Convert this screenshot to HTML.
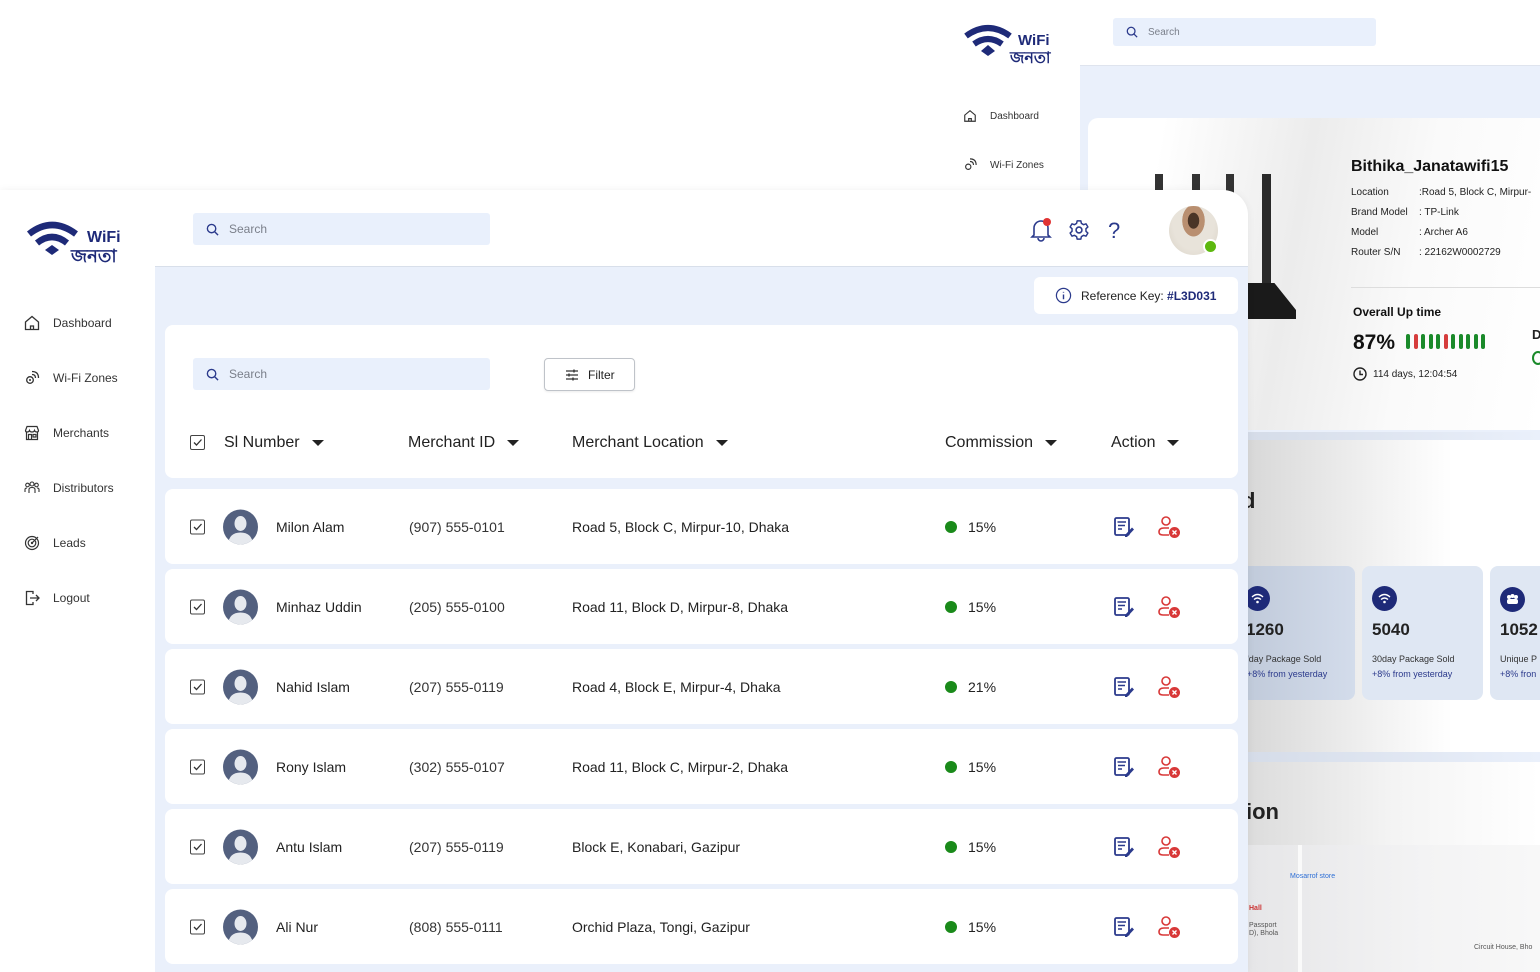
<!DOCTYPE html>
<html><head><meta charset="utf-8"><style>
*{box-sizing:border-box;margin:0;padding:0}
body{width:1540px;height:972px;overflow:hidden;background:#fff;font-family:"Liberation Sans",Arial,sans-serif;position:relative;color:#222}
.abs{position:absolute}
.search{position:absolute;background:#e9f0fc;border-radius:3px;color:#7a7f8a;font-size:12px;display:flex;align-items:center}
.search svg{margin:0 10px 0 13px}
.nav{position:absolute;left:24px;font-size:12px;color:#333;display:flex;align-items:center}
.nav svg{margin-right:13px}
.row{position:absolute;left:165px;width:1073px;height:75px;background:#fff;border-radius:8px;font-size:14px;color:#222}
.row>*{position:absolute;top:50%;transform:translateY(-50%)}
.cb{width:15px;height:15px;border:1.5px solid #444;border-radius:2px}
.th{position:absolute;top:443px;font-size:16px;color:#222;transform:translateY(-50%);display:flex;align-items:center}
.th i{display:inline-block;width:0;height:0;border-left:6px solid transparent;border-right:6px solid transparent;border-top:6px solid #222;margin-left:12px}
.stat{position:absolute;top:566px;height:134px;border-radius:8px;background:#dfe7f3}
</style></head><body>

<!-- BACK SCREEN -->
<div class="abs" style="left:1080px;top:66px;width:460px;height:906px;background:#eaf0fb"></div>
<div class="abs" style="left:1080px;top:0;width:460px;height:66px;background:#fff;border-bottom:1px solid #dfe4ee"></div>
<div class="search" style="left:1113px;top:18px;width:263px;height:28px;font-size:10px"><svg width="12" height="12" viewBox="0 0 14 14"><circle cx="6" cy="6" r="4.5" fill="none" stroke="#2b3a8c" stroke-width="1.5"/><path d="M9.5 9.5L13 13" stroke="#2b3a8c" stroke-width="1.5"/></svg>Search</div>
<svg class="abs" style="left:962px;top:22px" width="92" height="42" viewBox="0 0 92 42"><path d="M4 14 Q26 -2 48 14" fill="none" stroke="#1e2a78" stroke-width="6"/><path d="M12 22 Q26 12 40 22" fill="none" stroke="#1e2a78" stroke-width="6"/><path d="M19 29 L26 23 L33 29 L26 34Z" fill="#1e2a78"/><text x="56" y="23" font-family="Liberation Sans" font-weight="bold" font-size="15" fill="#1e2a78">WiFi</text><text x="48" y="41" font-family="Liberation Sans" font-weight="bold" font-size="16" fill="#1e2a78">জনতা</text></svg>
<div class="nav" style="left:963px;top:109px;font-size:10px"><svg width="14" height="14" viewBox="0 0 16 16"><path d="M2 7L8 2L14 7V14H2Z M6.5 14V11H9.5V14" fill="none" stroke="#333" stroke-width="1.3"/></svg>Dashboard</div>
<div class="nav" style="left:963px;top:158px;font-size:10px"><svg width="14" height="14" viewBox="0 0 16 16"><circle cx="6" cy="10" r="3" fill="none" stroke="#333" stroke-width="1.3"/><path d="M8 4Q12 4 12 8M8 1Q15 1 15 8" fill="none" stroke="#333" stroke-width="1.3"/></svg>Wi-Fi Zones</div>
<div class="abs" style="left:1088px;top:118px;width:452px;height:312px;border-radius:10px 0 0 0;background:linear-gradient(100deg,#fff 15%,#ececec 45%,#fafafa 70%,#fff 100%)"></div>
<div class="abs" style="left:1155px;top:174px;width:8px;height:20px;background:#333"></div>
<div class="abs" style="left:1192px;top:174px;width:8px;height:20px;background:#333"></div>
<div class="abs" style="left:1226px;top:174px;width:8px;height:20px;background:#333"></div>
<div class="abs" style="left:1262px;top:174px;width:9px;height:110px;background:#2a2a2a"></div>
<div class="abs" style="left:1248px;top:283px;width:48px;height:36px;background:#1a1a1a;clip-path:polygon(0 0,55% 0,100% 75%,100% 100%,0 100%)"></div>
<div class="abs" style="left:1351px;top:158px;font-size:16px;font-weight:bold;color:#111">Bithika_Janatawifi15</div>
<div class="abs" style="left:1351px;top:183px;font-size:10px;line-height:20px;color:#222">Location<br>Brand Model<br>Model<br>Router S/N</div>
<div class="abs" style="left:1419px;top:183px;font-size:10px;line-height:20px;color:#222;white-space:nowrap">:Road 5, Block C, Mirpur-<br>: TP-Link<br>: Archer A6<br>: 22162W0002729</div>
<div class="abs" style="left:1351px;top:287px;width:189px;height:1px;background:#ddd"></div>
<div class="abs" style="left:1353px;top:305px;font-size:12px;font-weight:bold;color:#111">Overall Up time</div>
<div class="abs" style="left:1353px;top:331px;font-size:21px;font-weight:bold;color:#111">87%</div>
<div class="abs" style="left:1406px;top:334px;display:flex;gap:3.5px">
<i style="width:4px;height:15px;border-radius:2px;background:#1a8a2a"></i><i style="width:4px;height:15px;border-radius:2px;background:#d63c3c"></i><i style="width:4px;height:15px;border-radius:2px;background:#1a8a2a"></i><i style="width:4px;height:15px;border-radius:2px;background:#1a8a2a"></i><i style="width:4px;height:15px;border-radius:2px;background:#1a8a2a"></i><i style="width:4px;height:15px;border-radius:2px;background:#d63c3c"></i><i style="width:4px;height:15px;border-radius:2px;background:#1a8a2a"></i><i style="width:4px;height:15px;border-radius:2px;background:#1a8a2a"></i><i style="width:4px;height:15px;border-radius:2px;background:#1a8a2a"></i><i style="width:4px;height:15px;border-radius:2px;background:#1a8a2a"></i><i style="width:4px;height:15px;border-radius:2px;background:#1a8a2a"></i></div>
<div class="abs" style="left:1353px;top:367px;font-size:10px;color:#222;display:flex;align-items:center"><svg width="14" height="14" viewBox="0 0 14 14" style="margin-right:6px"><circle cx="7" cy="7" r="6" fill="none" stroke="#222" stroke-width="1.4"/><path d="M7 3.5V7.5H10" fill="none" stroke="#222" stroke-width="1.4"/></svg>114 days, 12:04:54</div>
<div class="abs" style="left:1532px;top:327px;font-size:13px;font-weight:bold">D</div>
<div class="abs" style="left:1532px;top:351px;width:12px;height:14px;border:2px solid #1a8a2a;border-radius:50%"></div>
<div class="abs" style="left:1248px;top:432px;width:292px;height:8px;background:linear-gradient(90deg,#d5dce8,#eaf0fb)"></div>
<div class="abs" style="left:1248px;top:440px;width:292px;height:312px;background:linear-gradient(90deg,#d8d8d8,#f2f2f2 45%,#fff 70%)"></div>
<div class="abs" style="left:1242px;top:488px;font-size:22px;font-weight:bold">d</div>
<div class="stat" style="left:1220px;width:135px;background:linear-gradient(90deg,#bcc6d6,#d3dceb)"></div>
<div class="stat" style="left:1362px;width:121px"></div>
<div class="stat" style="left:1490px;width:60px"></div>
<svg class="abs" style="left:1245px;top:586px" width="25" height="25"><circle cx="12.5" cy="12.5" r="12.5" fill="#1e2a78"/><path d="M7 11Q12.5 6 18 11M9 13.5Q12.5 10.5 16 13.5" fill="none" stroke="#fff" stroke-width="1.4"/><circle cx="12.5" cy="16" r="1.3" fill="#fff"/></svg>
<svg class="abs" style="left:1372px;top:586px" width="25" height="25"><circle cx="12.5" cy="12.5" r="12.5" fill="#1e2a78"/><path d="M7 11Q12.5 6 18 11M9 13.5Q12.5 10.5 16 13.5" fill="none" stroke="#fff" stroke-width="1.4"/><circle cx="12.5" cy="16" r="1.3" fill="#fff"/></svg>
<svg class="abs" style="left:1500px;top:587px" width="25" height="25"><circle cx="12.5" cy="12.5" r="12.5" fill="#1e2a78"/><circle cx="9" cy="10" r="2" fill="#fff"/><circle cx="12.5" cy="9" r="2" fill="#fff"/><circle cx="16" cy="10" r="2" fill="#fff"/><rect x="7" y="12" width="11" height="5" rx="2" fill="#fff"/></svg>
<div class="abs" style="left:1246px;top:620px;font-size:17px;font-weight:bold">1260</div>
<div class="abs" style="left:1372px;top:620px;font-size:17px;font-weight:bold">5040</div>
<div class="abs" style="left:1500px;top:620px;font-size:17px;font-weight:bold">1052</div>
<div class="abs" style="left:1247px;top:652px;font-size:9px;line-height:15px;color:#333;white-space:nowrap">'day Package Sold<br><span style="color:#2b3a8c">+8% from yesterday</span></div>
<div class="abs" style="left:1372px;top:652px;font-size:9px;line-height:15px;color:#333;white-space:nowrap">30day Package Sold<br><span style="color:#2b3a8c">+8% from yesterday</span></div>
<div class="abs" style="left:1500px;top:652px;font-size:9px;line-height:15px;color:#333;white-space:nowrap">Unique P<br><span style="color:#2b3a8c">+8% fron</span></div>
<div class="abs" style="left:1248px;top:752px;width:292px;height:10px;background:linear-gradient(90deg,#d5dce8,#eaf0fb)"></div>
<div class="abs" style="left:1248px;top:762px;width:292px;height:210px;background:linear-gradient(90deg,#dcdcdc,#f4f4f4 50%,#fff)"></div>
<div class="abs" style="left:1246px;top:799px;font-size:22px;font-weight:bold">ion</div>
<div class="abs" style="left:1248px;top:845px;width:292px;height:127px;background:linear-gradient(90deg,#e6e6e8,#f3f3f4 60%,#f8f8f8)"></div>
<div class="abs" style="left:1298px;top:845px;width:4px;height:127px;background:#fafafa"></div>
<div class="abs" style="left:1290px;top:873px;font-size:7px;color:#2d6fd6">Mosarrof store</div>
<div class="abs" style="left:1249px;top:905px;font-size:7px;color:#c33;font-weight:bold">Hall</div>
<div class="abs" style="left:1249px;top:922px;font-size:7px;color:#555;line-height:8px">Passport<br>D), Bhola</div>
<div class="abs" style="left:1474px;top:944px;font-size:7px;color:#555">Circuit House, Bho</div>

<!-- FRONT SCREEN -->
<div class="abs" style="left:0;top:190px;width:1248px;height:782px;background:#fff;border-top-right-radius:25px;box-shadow:0 0 8px rgba(0,0,0,.06)"></div>
<div class="abs" style="left:155px;top:266px;width:1093px;height:706px;background:#eaf0fb;border-top:1px solid #d8dfea"></div>
<svg class="abs" style="left:25px;top:218px" width="102" height="46" viewBox="0 0 102 46"><path d="M4 16 Q27 -2 51 16" fill="none" stroke="#1e2a78" stroke-width="6.5"/><path d="M12 25 Q27 13 42 25" fill="none" stroke="#1e2a78" stroke-width="6.5"/><path d="M20 32 L27 27 L34 32 L27 37Z" fill="#1e2a78"/><text x="62" y="24" font-family="Liberation Sans" font-weight="bold" font-size="16" fill="#1e2a78">WiFi</text><text x="46" y="44" font-family="Liberation Sans" font-weight="bold" font-size="18" fill="#1e2a78">জনতা</text></svg>
<div class="search" style="left:193px;top:213px;width:297px;height:32px"><svg width="13" height="13" viewBox="0 0 14 14"><circle cx="6" cy="6" r="4.5" fill="none" stroke="#2b3a8c" stroke-width="1.5"/><path d="M9.5 9.5L13 13" stroke="#2b3a8c" stroke-width="1.5"/></svg>Search</div>
<svg class="abs" style="left:1030px;top:217px" width="24" height="26" viewBox="0 0 24 26"><path d="M4 18V11a7 7 0 0 1 14 0v7l2 2H2z M8 21a3 3 0 0 0 6 0" fill="none" stroke="#2b3a8c" stroke-width="1.6"/><circle cx="17" cy="5" r="4" fill="#e03333"/></svg>
<svg class="abs" style="left:1068px;top:219px" width="22" height="22" viewBox="0 0 24 24"><circle cx="12" cy="12" r="3.2" fill="none" stroke="#2b3a8c" stroke-width="1.7"/><path d="M10 2h4l.6 2.8 2.4 1.4 2.7-.9 2 3.4-2.1 1.9v2.8l2.1 1.9-2 3.4-2.7-.9-2.4 1.4L14 22h-4l-.6-2.8-2.4-1.4-2.7.9-2-3.4 2.1-1.9v-2.8L2.3 8.7l2-3.4 2.7.9 2.4-1.4z" fill="none" stroke="#2b3a8c" stroke-width="1.6" stroke-linejoin="round"/></svg>
<div class="abs" style="left:1108px;top:218px;font-size:22px;color:#2b3a8c">?</div>
<div class="abs" style="left:1169px;top:206px;width:49px;height:49px;border-radius:50%;background:radial-gradient(ellipse at 50% 30%,#4a3426 0 16%,#b98f70 17% 32%,#e8e3da 33% 60%,#d9d2c6 100%);overflow:hidden"></div>
<div class="abs" style="left:1203px;top:239px;width:15px;height:15px;border-radius:50%;background:#5db80f;border:2px solid #fff"></div>
<div class="abs" style="left:1034px;top:277px;width:204px;height:37px;background:#fff;border-radius:6px;font-size:12px;color:#222;display:flex;align-items:center;padding-left:21px"><svg width="17" height="17" viewBox="0 0 18 18" style="margin-right:9px"><circle cx="9" cy="9" r="7.5" fill="none" stroke="#2b3a8c" stroke-width="1.3"/><path d="M9 8V13M9 5.2V6" stroke="#2b3a8c" stroke-width="1.5"/></svg>Reference Key:&nbsp;<b style="color:#1e2a78">#L3D031</b></div>
<div class="nav" style="top:315px"><svg width="16" height="16" viewBox="0 0 16 16"><path d="M1.5 7L8 1.5L14.5 7V14.5H1.5Z M6.5 14.5V11H9.5V14.5" fill="none" stroke="#333" stroke-width="1.3"/></svg>Dashboard</div>
<div class="nav" style="top:370px"><svg width="16" height="16" viewBox="0 0 16 16"><circle cx="6" cy="10" r="3.3" fill="none" stroke="#333" stroke-width="1.3"/><circle cx="6" cy="10" r="1" fill="#333"/><path d="M8 4.5Q11.5 4.5 11.5 8M8 1.5Q14.5 1.5 14.5 8" fill="none" stroke="#333" stroke-width="1.3"/></svg>Wi-Fi Zones</div>
<div class="nav" style="top:425px"><svg width="16" height="16" viewBox="0 0 16 16"><path d="M1.5 5.5L3 1.5H13L14.5 5.5Q14.5 7 13 7Q11 7 10.5 5.5Q10 7 8 7Q6 7 5.5 5.5Q5 7 3 7Q1.5 7 1.5 5.5Z M2.5 7V14.5H13.5V7 M4.5 14.5V9.5H7.5V14.5 M9 9.5H12V12H9Z" fill="none" stroke="#333" stroke-width="1.2"/></svg>Merchants</div>
<div class="nav" style="top:480px"><svg width="16" height="16" viewBox="0 0 16 16"><circle cx="3.5" cy="5" r="1.8" fill="none" stroke="#333" stroke-width="1.1"/><circle cx="8" cy="4" r="2" fill="none" stroke="#333" stroke-width="1.1"/><circle cx="12.5" cy="5" r="1.8" fill="none" stroke="#333" stroke-width="1.1"/><path d="M1 12V9.5Q1 8 3 8 M15 12V9.5Q15 8 13 8 M5 13V9.5Q5 7.5 8 7.5Q11 7.5 11 9.5V13" fill="none" stroke="#333" stroke-width="1.1"/></svg>Distributors</div>
<div class="nav" style="top:535px"><svg width="16" height="16" viewBox="0 0 16 16"><circle cx="8" cy="8" r="6.5" fill="none" stroke="#333" stroke-width="1.2"/><circle cx="8" cy="8" r="3.8" fill="none" stroke="#333" stroke-width="1.2"/><circle cx="8" cy="8" r="1.2" fill="#333"/><path d="M8 8L14 2" stroke="#333" stroke-width="1.2"/></svg>Leads</div>
<div class="nav" style="top:590px"><svg width="16" height="16" viewBox="0 0 16 16"><path d="M9 4V1.5H2.5V14.5H9V12 M6 8H15 M12 5L15 8L12 11" fill="none" stroke="#333" stroke-width="1.3"/></svg>Logout</div>

<div class="abs" style="left:165px;top:325px;width:1073px;height:153px;background:#fff;border-radius:8px"></div>
<div class="search" style="left:193px;top:358px;width:297px;height:32px"><svg width="13" height="13" viewBox="0 0 14 14"><circle cx="6" cy="6" r="4.5" fill="none" stroke="#2b3a8c" stroke-width="1.5"/><path d="M9.5 9.5L13 13" stroke="#2b3a8c" stroke-width="1.5"/></svg>Search</div>
<div class="abs" style="left:544px;top:358px;width:91px;height:33px;border:1px solid #bfc3c9;border-radius:4px;font-size:12px;color:#222;display:flex;align-items:center;padding-left:20px;box-shadow:0 1px 2px rgba(0,0,0,.08)"><svg width="14" height="12" viewBox="0 0 14 12" style="margin-right:9px"><path d="M1 2H13M1 6H13M1 10H13" stroke="#333" stroke-width="1.2"/><path d="M9 0.5V3.5M4 4.5V7.5M8 8.5V11.5" stroke="#333" stroke-width="1.4"/></svg>Filter</div>
<div class="abs cb" style="left:190px;top:435px"></div>
<svg class="abs" style="left:192px;top:437px" width="11" height="11"><path d="M2 5.5L4.5 8L9.5 2.5" fill="none" stroke="#333" stroke-width="1.3"/></svg>
<div class="th" style="left:224px">Sl Number<i></i></div>
<div class="th" style="left:408px">Merchant ID<i></i></div>
<div class="th" style="left:572px">Merchant Location<i></i></div>
<div class="th" style="left:945px">Commission<i></i></div>
<div class="th" style="left:1111px">Action<i></i></div>

<div id="rows"></div>
<script>
var d=[["Milon Alam","(907) 555-0101","Road 5, Block C, Mirpur-10, Dhaka","15%"],
["Minhaz Uddin","(205) 555-0100","Road 11, Block D, Mirpur-8, Dhaka","15%"],
["Nahid Islam","(207) 555-0119","Road 4, Block E, Mirpur-4, Dhaka","21%"],
["Rony Islam","(302) 555-0107","Road 11, Block C, Mirpur-2, Dhaka","15%"],
["Antu Islam","(207) 555-0119","Block E, Konabari, Gazipur","15%"],
["Ali Nur","(808) 555-0111","Orchid Plaza, Tongi, Gazipur","15%"]];
var h="";
d.forEach(function(r,i){var t=489+i*80;
h+='<div class="row" style="top:'+t+'px">'+
'<div class="cb" style="left:25px"></div><svg style="left:27px" width="11" height="11"><path d="M2 5.5L4.5 8L9.5 2.5" fill="none" stroke="#333" stroke-width="1.3"/></svg>'+
'<svg style="left:58px" width="35" height="35" viewBox="0 0 35 35"><defs><clipPath id="c'+i+'"><circle cx="17.5" cy="17.5" r="17.5"/></clipPath></defs><circle cx="17.5" cy="17.5" r="17.5" fill="#53607f"/><g clip-path="url(#c'+i+')"><ellipse cx="17.5" cy="14" rx="6" ry="7.5" fill="#e6e9ee"/><path d="M5 35Q6 23 17.5 23Q29 23 30 35Z" fill="#e6e9ee"/></g></svg>'+
'<div style="left:111px">'+r[0]+'</div><div style="left:244px;color:#333">'+r[1]+'</div><div style="left:407px">'+r[2]+'</div>'+
'<div style="left:780px;width:12px;height:12px;border-radius:50%;background:#1a8a1a"></div><div style="left:803px">'+r[3]+'</div>'+
'<svg style="left:948px" width="22" height="22" viewBox="0 0 22 22"><rect x="2" y="2" width="14" height="17" rx="1.5" fill="none" stroke="#2b3a8c" stroke-width="1.8"/><path d="M5 6H13M5 9.5H12M5 13H9M4 6H4.5" stroke="#2b3a8c" stroke-width="1.5"/><path d="M12 19L19 11.5L21 13.5L14 21H12Z" fill="#2b3a8c"/></svg>'+
'<svg style="left:992px" width="24" height="24" viewBox="0 0 24 24"><circle cx="9" cy="6" r="4" fill="none" stroke="#d83838" stroke-width="1.6"/><path d="M12 13H7Q2 13 2 17Q2 20 6 20H12" fill="none" stroke="#d83838" stroke-width="1.6"/><circle cx="17.5" cy="17.5" r="5.5" fill="#d83838"/><path d="M15.5 15.5L19.5 19.5M19.5 15.5L15.5 19.5" stroke="#fff" stroke-width="1.4"/></svg>'+
'</div>';});
document.getElementById("rows").innerHTML=h;
</script>
</body></html>
